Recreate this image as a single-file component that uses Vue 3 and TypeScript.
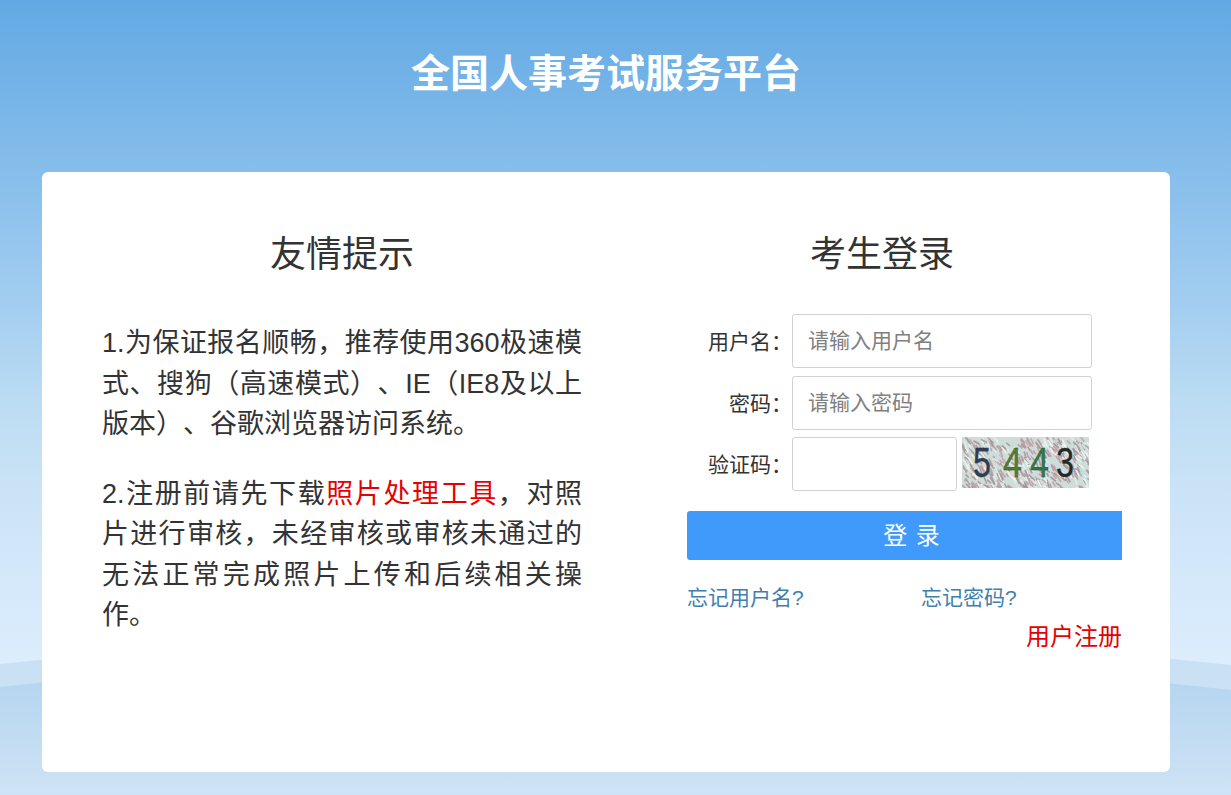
<script setup lang="ts">
import { ref } from 'vue';

const username = ref('');
const password = ref('');
const captcha = ref('');

// streaks for the captcha picture
const noise: { x: number; y: number; dx: number; dy: number; c: string }[] = [];
const colors = ['#b49a9e', '#d9eeec', '#a8989c', '#c4e2e0', '#c6a6ac', '#eef4f0', '#b8a4a8'];
let seed = 5443;
function rnd(n: number) {
  seed = (seed * 9301 + 49297) % 233280;
  return (seed / 233280) * n;
}
for (let i = 0; i < 520; i++) {
  noise.push({ x: rnd(127), y: rnd(51), dx: 2 + rnd(4), dy: 3 + rnd(5), c: colors[Math.floor(rnd(7))] });
}
</script>

<template>
  <div class="page">
    <svg class="waves" viewBox="0 0 1231 795" preserveAspectRatio="none" aria-hidden="true">
      <defs>
        <linearGradient id="wave1" x1="0" y1="0" x2="0" y2="1">
          <stop offset="0" stop-color="#c8e0f4" />
          <stop offset="1" stop-color="#cfe3f5" />
        </linearGradient>
        <linearGradient id="wave2" x1="0" y1="0" x2="0" y2="1">
          <stop offset="0" stop-color="#b0d2ee" />
          <stop offset="0.55" stop-color="#c0dbf2" />
          <stop offset="1" stop-color="#cfe3f5" />
        </linearGradient>
      </defs>
      <path d="M0 664 Q615 597 1231 665 L1231 795 L0 795 Z" fill="url(#wave1)" />
      <path d="M0 687 Q615 619 1231 690 L1231 795 L0 795 Z" fill="url(#wave2)" />
    </svg>

    <div class="wrap">
      <h1 class="title">全国人事考试服务平台</h1>

      <div class="card">
        <section class="notice">
          <h2>友情提示</h2>
          <p>1.为保证报名顺畅，推荐使用360极速模式、搜狗（高速模式）、IE（IE8及以上版本）、谷歌浏览器访问系统。</p>
          <p>2.注册前请先下载<a class="red" href="#">照片处理工具</a>，对照片进行审核，未经审核或审核未通过的无法正常完成照片上传和后续相关操作。</p>
        </section>

        <section class="login">
          <h2>考生登录</h2>
          <form class="form" @submit.prevent>
            <div class="field">
              <label for="username">用户名：</label>
              <input id="username" v-model="username" type="text" placeholder="请输入用户名">
            </div>
            <div class="field">
              <label for="password">密码：</label>
              <input id="password" v-model="password" type="password" placeholder="请输入密码">
            </div>
            <div class="field captcha-row">
              <label for="captcha">验证码：</label>
              <input id="captcha" v-model="captcha" type="text">
              <svg class="captcha" viewBox="0 0 127 51" width="127" height="51">
                <rect width="127" height="51" fill="#cfdcd8" />
                <line
                  v-for="(n, i) in noise"
                  :key="i"
                  :x1="n.x"
                  :y1="n.y"
                  :x2="n.x + n.dx"
                  :y2="n.y + n.dy"
                  :stroke="n.c"
                  stroke-width="1.6"
                />
                <text x="11" y="40" fill="#2f3d55" textLength="18" lengthAdjust="spacingAndGlyphs">5</text>
                <text x="41" y="40" fill="#4f7f2c" textLength="19" lengthAdjust="spacingAndGlyphs">4</text>
                <text x="68" y="40" fill="#2f7a45" textLength="19" lengthAdjust="spacingAndGlyphs">4</text>
                <text x="94" y="40" fill="#23282a" textLength="18" lengthAdjust="spacingAndGlyphs">3</text>
              </svg>
            </div>
            <button class="submit" type="submit">登 录</button>
            <div class="links">
              <a href="#">忘记用户名?</a>
              <a href="#">忘记密码?</a>
            </div>
            <div class="register">
              <a class="red" href="#">用户注册</a>
            </div>
          </form>
        </section>
      </div>
    </div>
  </div>
</template>

<style>
html, body {
  margin: 0;
  padding: 0;
}
</style>

<style scoped>
.page {
  position: relative;
  height: 795px;
  overflow: hidden;
  background: linear-gradient(to bottom, #62a9e3 0, #82bbea 151px, #a2cdf0 302px, #bcdcf3 403px, #cce4f7 504px, #d7eafb 604px, #dcedfb 660px);
  font-family: "Liberation Sans", "Noto Sans CJK SC", sans-serif;
  text-spacing-trim: space-all;
  color: #333;
}

.waves {
  position: absolute;
  left: 0;
  top: 0;
  width: 100%;
  height: 100%;
}

.wrap {
  position: relative;
  width: 1128px;
  margin-left: 42px;
}

.title {
  margin: 0;
  height: 172px;
  padding-top: 47px;
  box-sizing: border-box;
  font-size: 39px;
  line-height: 54px;
  font-weight: 700;
  color: #fff;
  text-align: center;
}

.card {
  display: flex;
  justify-content: space-between;
  height: 600px;
  box-sizing: border-box;
  padding: 0 48px 0 60px;
  background: #fff;
  border-radius: 6px;
}

h2 {
  margin: 0;
  font-size: 36px;
  line-height: 50px;
  font-weight: 400;
  text-align: center;
  color: #333;
}

.notice {
  width: 480px;
  padding-top: 58px;
}

.notice h2 {
  margin-bottom: 43px;
}

.notice p {
  margin: 0 0 29px;
  font-size: 27px;
  line-height: 40.5px;
  text-align: justify;
}

.red {
  color: #e60000;
  text-decoration: none;
}

.login {
  width: 435px;
  padding-top: 58px;
}

.login h2 {
  width: 390px;
}

.form {
  margin-top: 34px;
}

.field {
  display: flex;
  align-items: center;
  height: 54px;
  margin-bottom: 8px;
}

.field:nth-child(2) {
  margin-bottom: 7px;
}

.captcha-row {
  margin-bottom: 20px;
}

.field label {
  width: 105px;
  padding-bottom: 2px;
  font-size: 21px;
  text-align: right;
  color: #333;
}

.field input {
  width: 300px;
  height: 54px;
  box-sizing: border-box;
  padding: 0 15px;
  border: 1px solid #d2d2d2;
  border-radius: 3px;
  outline: none;
  background: #fff;
  font: inherit;
  font-size: 21px;
  color: #333;
}

.field input::placeholder {
  color: #808080;
}

.captcha-row input {
  width: 165px;
}

.captcha {
  margin-left: 5px;
  align-self: flex-start;
}

.captcha text {
  font-family: "Liberation Sans", sans-serif;
  font-size: 42px;
  stroke: currentColor;
  stroke-width: 0.3px;
}

.submit {
  display: block;
  width: 100%;
  height: 49px;
  padding: 0 0 4px 15px;
  border: none;
  border-radius: 3px 0 0 3px;
  background: #409afc;
  color: #fff;
  font: inherit;
  font-size: 24px;
  letter-spacing: 1px;
}

.links {
  display: flex;
  margin-top: 23px;
  font-size: 21px;
  line-height: 30px;
}

.links a {
  flex: none;
  width: 234px;
  color: #3f7fae;
  text-decoration: none;
}

.register {
  margin-top: 7px;
  font-size: 24px;
  line-height: 34px;
  text-align: right;
}
</style>
